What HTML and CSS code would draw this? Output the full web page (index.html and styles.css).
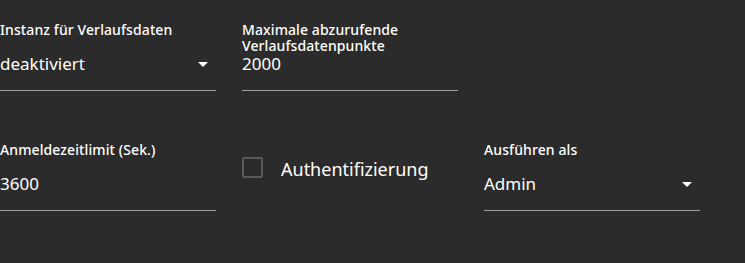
FILE: index.html
```html
<!DOCTYPE html>
<html lang="de">
<head>
<meta charset="utf-8">
<title>Einstellungen</title>
<link rel="stylesheet" href="styles.css">
</head>
<body>
<div class="form">
  <div class="field">
    <div class="label">Instanz für Verlaufsdaten</div>
    <div class="value select"><span>deaktiviert</span><span class="arrow"></span></div>
  </div>
  <div class="field">
    <div class="label">Maximale abzurufende Verlaufsdatenpunkte</div>
    <div class="value"><span>2000</span></div>
  </div>
  <div class="spacer"></div>
  <div class="field">
    <div class="label">Anmeldezeitlimit (Sek.)</div>
    <div class="value"><span>3600</span></div>
  </div>
  <div class="check">
    <span class="box"></span>
    <span class="check-label">Authentifizierung</span>
  </div>
  <div class="field">
    <div class="label">Ausführen als</div>
    <div class="value select"><span>Admin</span><span class="arrow"></span></div>
  </div>
</div>
</body>
</html>
```
FILE: styles.css
```css
html, body {
  margin: 0;
  padding: 0;
  background: #2b2b2b;
  color: #ffffff;
  font-family: "Noto Sans", "Open Sans", sans-serif;
}
body {
  width: 745px;
  height: 263px;
  overflow: hidden;
}
.form {
  display: grid;
  grid-template-columns: repeat(3, 216px);
  column-gap: 26px;
  row-gap: 51px;
  padding-top: 22px;
}
.field {
  display: flex;
  flex-direction: column;
  border-bottom: 1px solid #9e9e9e;
  height: 68px;
}
.label {
  font-size: 14px;
  letter-spacing: 0.1px;
  line-height: 16px;
  height: 32px;
  font-weight: 500;
}
.value {
  font-size: 17px;
  line-height: 20px;
  height: 20px;
  display: flex;
  align-items: flex-start;
  justify-content: space-between;
}
.arrow {
  width: 0;
  height: 0;
  border-left: 5px solid transparent;
  border-right: 5px solid transparent;
  border-top: 5px solid #ffffff;
  margin-top: 8px;
  margin-right: 8px;
}
.check {
  display: flex;
  align-items: center;
  gap: 18px;
  padding-top: 15px;
  height: 21px;
}
.box {
  width: 17px;
  height: 17px;
  border: 2px solid #5a5a5a;
  border-radius: 2px;
  flex: none;
}
.check-label {
  font-size: 18px;
  line-height: 22px;
  margin-top: 2px;
}
```
